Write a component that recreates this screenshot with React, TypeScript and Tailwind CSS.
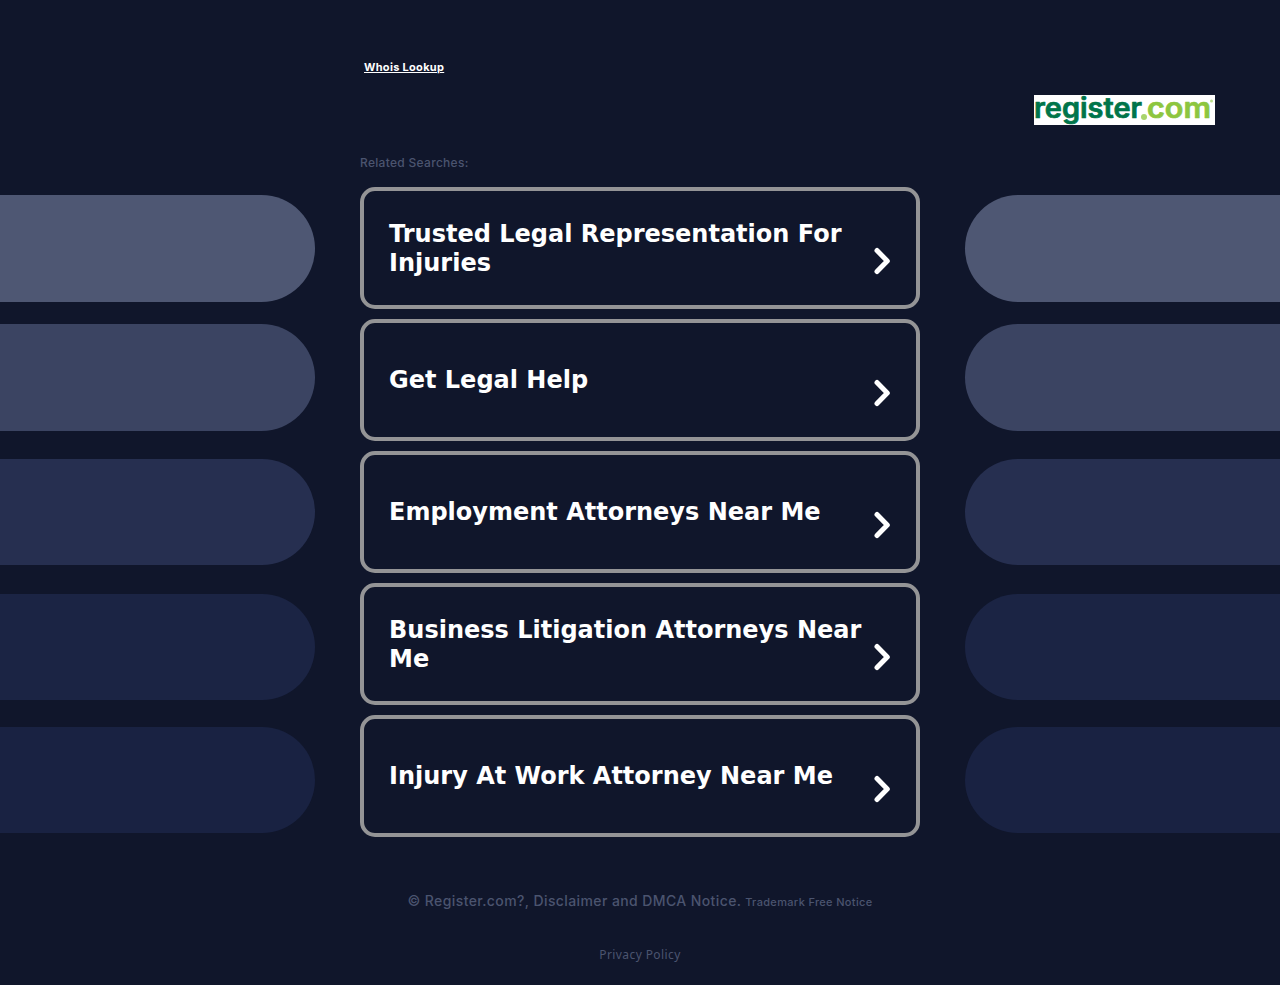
const searches = [
	"Trusted Legal Representation For Injuries",
	"Get Legal Help",
	"Employment Attorneys Near Me",
	"Business Litigation Attorneys Near Me",
	"Injury At Work Attorney Near Me",
];

const Logo = () => (
	<svg
		aria-label="register.com"
		className="block h-[30px] w-[181px] overflow-visible bg-white font-['Inter',sans-serif] text-[28px] font-semibold"
		viewBox="0 0 181 30"
	>
		<g strokeLinejoin="round" strokeWidth="0.7">
			<text
				fill="#00754a"
				lengthAdjust="spacingAndGlyphs"
				stroke="#00754a"
				textLength="108"
				x="0"
				y="23"
			>
				register
			</text>
			<circle cx="110" cy="22" fill="#a9d46c" r="3" />
			<text
				fill="#8dc63f"
				lengthAdjust="spacingAndGlyphs"
				stroke="#8dc63f"
				textLength="64"
				x="113"
				y="23"
			>
				com
			</text>
		</g>
		<circle cx="177.5" cy="6" fill="#b9dc88" r="1.5" />
	</svg>
);

const Chevron = () => (
	<svg
		className="mt-[25px] h-7 w-[18px] shrink-0"
		fill="none"
		stroke="#fff"
		strokeLinecap="round"
		strokeLinejoin="round"
		strokeWidth="5"
		viewBox="0 0 18 28"
	>
		<path d="M4 3.5 L14.3 14 L4 24.5" />
	</svg>
);

const LeftPills = () => (
	<div className="w-[315px] pt-[195px]">
		<div className="h-[107px] rounded-r-full bg-[#4e5773]" />
		<div className="mt-[22px] h-[107px] rounded-r-full bg-[#3b4462]" />
		<div className="mt-[28px] h-[106px] rounded-r-full bg-[#262f50]" />
		<div className="mt-[29px] h-[106px] rounded-r-full bg-[#1b2444]" />
		<div className="mt-[27px] h-[106px] rounded-r-full bg-[#192242]" />
	</div>
);

const RightPills = () => (
	<div className="pt-[70px]">
		<div className="h-[107px] rounded-l-full bg-[#4e5773]" />
		<div className="mt-[22px] h-[107px] rounded-l-full bg-[#3b4462]" />
		<div className="mt-[28px] h-[106px] rounded-l-full bg-[#262f50]" />
		<div className="mt-[29px] h-[106px] rounded-l-full bg-[#1b2444]" />
		<div className="mt-[27px] h-[106px] rounded-l-full bg-[#192242]" />
	</div>
);

const App = () => {
	return (
		<div className="grid h-[985px] w-full grid-cols-[315px_560px_315px] justify-between overflow-hidden bg-[#10162b] font-['Inter',sans-serif]">
			<LeftPills />
			<main className="flex flex-col">
				<div className="flex h-[155px] items-start pt-[59px] pl-1">
					<a
						className="text-[11px] leading-4 font-bold tracking-[0.3px] text-white underline"
						href="#whois"
					>
						Whois Lookup
					</a>
				</div>
				<p className="h-[32px] text-[12px] leading-4 font-medium tracking-[0.3px] text-[#4b546f]">
					Related Searches:
				</p>
				<div className="flex flex-col gap-[10px]">
					{searches.map((search) => (
						<a
							key={search}
							className="flex h-[122px] items-center justify-between rounded-[15px] border-4 border-[#949496] pt-px pr-[25px] pl-[25px] font-['DejaVu_Sans',sans-serif] text-[24px] leading-[29px] font-bold text-white"
							href="#search"
						>
							<span className="w-[480px]">{search}</span>
							<Chevron />
						</a>
					))}
				</div>
				<footer className="mt-[55px] flex flex-col items-center text-[#4b546f]">
					<p className="text-[14px] leading-[18px] font-medium whitespace-nowrap">
						<span className="tracking-[0.4px]">
							© Register.com?, Disclaimer and DMCA Notice.
						</span>{" "}
						<span className="text-[11px] tracking-[0.34px]">
							Trademark Free Notice
						</span>
					</p>
					<a
						className="mt-[36px] font-['Noto_Sans',sans-serif] text-[12px] leading-4 tracking-[0.4px]"
						href="#privacy"
					>
						Privacy Policy
					</a>
				</footer>
			</main>
			<div>
				<div className="flex h-[125px] items-end justify-end pr-[65px]">
					<Logo />
				</div>
				<RightPills />
			</div>
		</div>
	);
};

export default App;
